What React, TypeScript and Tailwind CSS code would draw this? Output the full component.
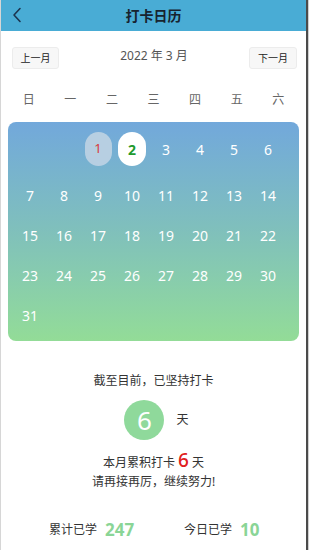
import React from "react";

const font = { fontFamily: '"Noto Sans", "Noto Sans CJK SC", sans-serif' };

export default function App() {
  const weekdays = ["日", "一", "二", "三", "四", "五", "六"];
  const cells: (number | null)[] = [null, null];
  for (let i = 1; i <= 31; i++) cells.push(i);
  const rows: (number | null)[][] = [];
  for (let i = 0; i < cells.length; i += 8) rows.push(cells.slice(i, i + 8));

  return (
    <div className="flex w-[309px] h-[550px] bg-white overflow-hidden" style={font}>
      <div className="w-px bg-[#d6d6d6]" />
      <div className="flex-1 flex flex-col">
        <div className="h-[31px] bg-[#49acd5] flex items-center relative">
          <svg className="absolute left-[10px] top-[7px]" width="12" height="16" viewBox="0 0 12 16">
            <path d="M9 1.5 L3 8 L9 14.5" fill="none" stroke="#1c3550" strokeWidth="1.6" strokeLinecap="round" strokeLinejoin="round" />
          </svg>
          <div className="flex-1 text-center text-[14px] font-bold text-[#17232f] leading-none">打卡日历</div>
        </div>

        <div className="flex items-center justify-between px-[11px] mt-[16px]">
          <div className="w-[47px] h-[22px] bg-[#f7f7f7] border border-[#ececec] rounded-[3px] flex items-center justify-center text-[10px] text-[#222]">上一月</div>
          <div className="text-[12px] text-[#555] -mt-[5px]">2022 年 3 月</div>
          <div className="w-[48px] h-[22px] bg-[#f7f7f7] border border-[#ececec] rounded-[3px] flex items-center justify-center text-[10px] text-[#222] mr-[-2px]">下一月</div>
        </div>

        <div className="grid grid-cols-7 px-[7px] mt-[21px] h-[20px] items-center">
          {weekdays.map((w) => (
            <div key={w} className="text-center text-[12px] text-[#666]">{w}</div>
          ))}
        </div>

        <div className="mx-[7px] mt-[12px] h-[219px] rounded-[8px] bg-gradient-to-b from-[#72a8db] via-[#80c0bb] to-[#93dc97] pl-[5px] pt-[10px]">
          {rows.map((row, ri) => (
            <div key={ri} className={ri === 0 ? "flex h-[34px] mb-[9px]" : "flex h-[40px]"}>
              {row.map((d, ci) => (
                <div key={ci} className="w-[34px] h-full flex items-center justify-center">
                  {d === 1 ? (
                    <div className="w-[27px] h-[34px] rounded-full bg-[#b7cfe2] flex items-center justify-center text-[13px] text-[#d83a3a]">1</div>
                  ) : d === 2 ? (
                    <div className="w-[28px] h-[34px] rounded-full bg-white flex items-center justify-center text-[14px] font-bold text-[#1f9a2e]">2</div>
                  ) : d ? (
                    <span className="text-[14px] text-white">{d}</span>
                  ) : null}
                </div>
              ))}
            </div>
          ))}
        </div>

        <div className="mt-[31px] text-center text-[12px] text-[#333] leading-[18px]">截至目前，已坚持打卡</div>
        <div className="flex items-center justify-center mt-[10px] pl-[6px] gap-[12px]">
          <div className="w-[40px] h-[40px] rounded-full bg-[#8fd99b] flex items-center justify-center text-[26px] text-white leading-none">6</div>
          <span className="text-[12px] text-[#333]">天</span>
        </div>
        <div className="mt-[10px] text-center text-[12px] text-[#333] leading-[20px]">
          本月累积打卡 <span className="text-[19px] text-[#e02020] font-medium">6</span> 天
        </div>
        <div className="text-center text-[12px] text-[#333] leading-[18px]">请再接再厉，继续努力!</div>

        <div className="flex mt-[26px] items-center">
          <div className="flex items-center pl-[48px] w-[183px]">
            <span className="text-[12px] text-[#333]">累计已学</span>
            <span className="ml-[8px] text-[17px] font-bold text-[#8ad596]">247</span>
          </div>
          <div className="flex items-center">
            <span className="text-[12px] text-[#333]">今日已学</span>
            <span className="ml-[8px] text-[17px] font-bold text-[#8ad596]">10</span>
          </div>
        </div>
      </div>
      <div className="w-[2px] bg-[#4b4b4b]" />
      <div className="w-px bg-[#d0d0d0]" />
    </div>
  );
}
